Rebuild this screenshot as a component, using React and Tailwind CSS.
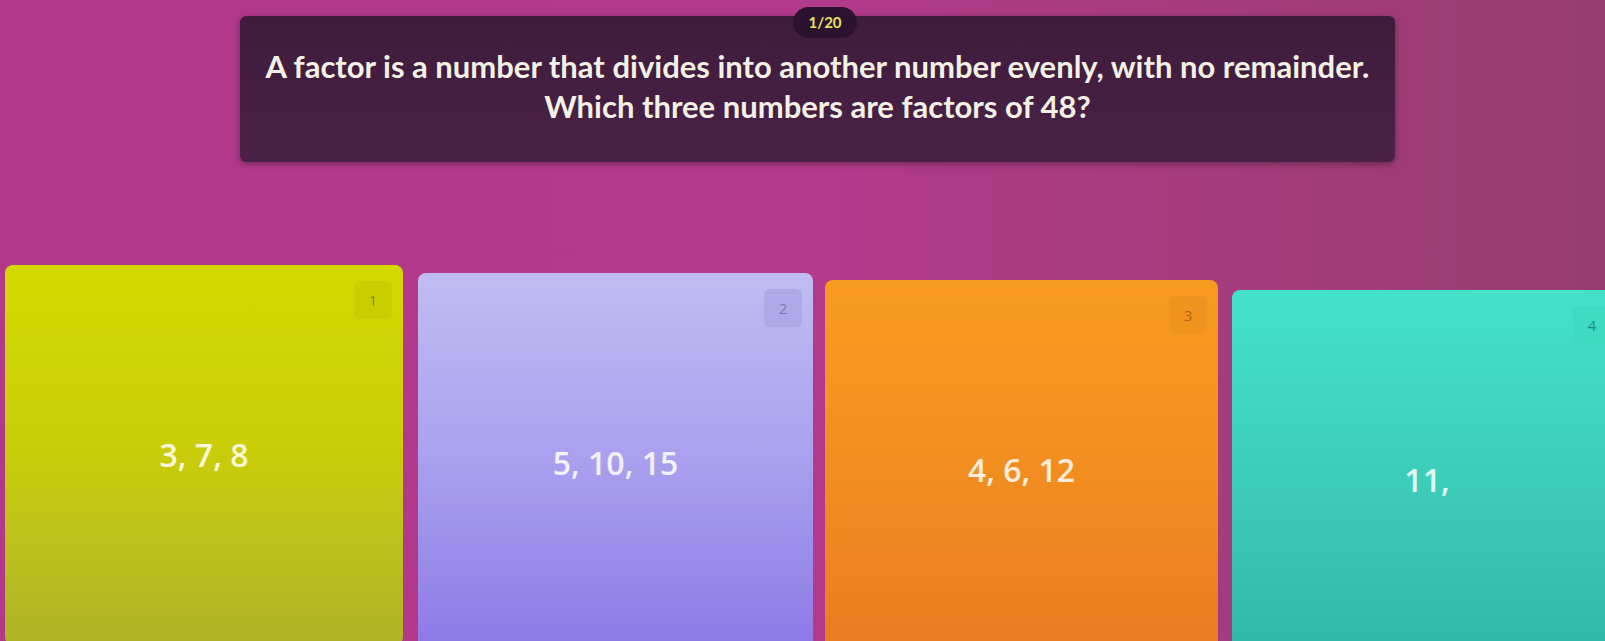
import React from "react";

const cards = [
  { n: "1", text: "3, 7, 8", cls: "w-[398px] mt-0 bg-linear-to-b from-[#d3d900] via-[#c9cd08] to-[#afb225]", label: "text-[#8a8a10] bg-[#c0c400]/40" },
  { n: "2", text: "5, 10, 15", cls: "w-[395px] mt-[8px] ml-[15px] bg-linear-to-b from-[#c0bcf2] via-[#aa9fee] to-[#8b78e6]", label: "text-[#7d78b0] bg-[#a9a3e6]/70" },
  { n: "3", text: "4, 6, 12", cls: "w-[393px] mt-[15px] ml-[12px] bg-linear-to-b from-[#f99b1f] via-[#f28e20] to-[#e97a22]", label: "text-[#b0661a] bg-[#ee9220]/70" },
  { n: "4", text: "11,", cls: "w-[390px] mt-[25px] ml-[14px] bg-linear-to-b from-[#44e2ca] via-[#3ccdb9] to-[#30b4a7]", label: "text-[#1f8a7c] bg-[#3cd8c0]/60" },
];

export default function App() {
  return (
    <div className="w-[1605px] h-[641px] overflow-hidden flex flex-col bg-linear-to-r from-[#b2388a] via-[#b23a8b] to-[#983c70]" style={{ fontFamily: "Lato, 'Open Sans', sans-serif" }}>
      <div className="relative shrink-0 mt-[16px] ml-[240px] w-[1155px] h-[146px] rounded-md bg-linear-to-b from-[#3e1b3b] to-[#4a2248] shadow-[0_2px_6px_rgba(0,0,0,0.35)] pt-[30px] text-center text-[31px] leading-[40px] font-bold text-[#f2f2e4]">
        <div className="absolute left-[553px] top-[-9px] w-[64px] h-[31px] rounded-full bg-[#2b1330] flex items-center justify-center text-[15px] leading-none font-bold text-[#e4e35e]">
          1/20
        </div>
        <p>A factor is a number that divides into another number evenly, with no remainder.</p>
        <p>Which three numbers are factors of 48?</p>
      </div>
      <div className="flex shrink-0 items-start mt-[103px] pl-[5px]">
        {cards.map((c) => (
          <div key={c.n} className={`relative shrink-0 h-[380px] rounded-lg flex items-center justify-center ${c.cls}`}>
            <div className={`absolute top-[16px] right-[11px] w-[38px] h-[38px] rounded-md flex items-center justify-center text-[15px] ${c.label}`} style={{ fontFamily: "'Open Sans', sans-serif" }}>
              {c.n}
            </div>
            <span className="text-[32px] font-semibold text-white/85" style={{ fontFamily: "'Open Sans', sans-serif" }}>{c.text}</span>
          </div>
        ))}
      </div>
    </div>
  );
}
